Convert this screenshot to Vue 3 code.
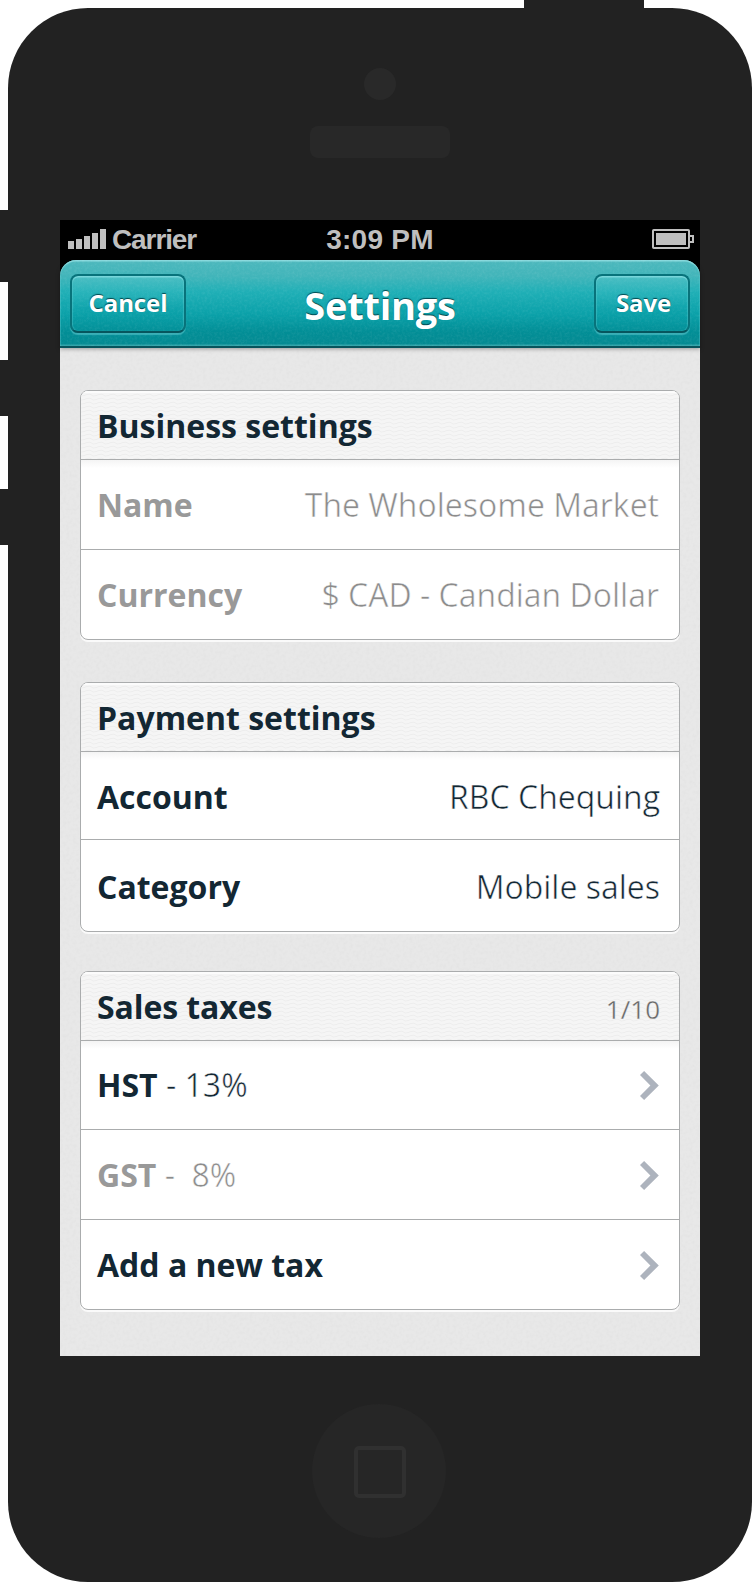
<script setup>
const bars = [8, 10, 13, 16, 20]

const sections = [
  {
    title: 'Business settings',
    size: 'business',
    rows: [
      { label: 'Name', value: 'The Wholesome Market', muted: true },
      { label: 'Currency', value: '$ CAD - Candian Dollar', muted: true },
    ],
  },
  {
    title: 'Payment settings',
    size: 'payment',
    rows: [
      { label: 'Account', value: 'RBC Chequing' },
      { label: 'Category', value: 'Mobile sales' },
    ],
  },
  {
    title: 'Sales taxes',
    size: 'taxes',
    count: '1/10',
    rows: [
      { label: 'HST', detail: ' - 13%', link: true },
      { label: 'GST', detail: ' -\u00a0 8%', link: true, muted: true },
      { label: 'Add a new tax', link: true },
    ],
  },
]
</script>

<template>
  <div class="stage">
    <span class="key key-top"></span>
    <span class="key key-mute"></span>
    <span class="key key-up"></span>
    <span class="key key-down"></span>

    <div class="phone">
      <div class="camera"></div>
      <div class="speaker"></div>

      <div class="screen">
        <div class="status">
          <div class="carrier">
            <span class="signal">
              <i v-for="h in bars" :key="h" :style="{ height: h + 'px' }"></i>
            </span>
            <span class="carrier-name">Carrier</span>
          </div>
          <span class="clock">3:09 PM</span>
          <svg class="battery" width="42" height="20" viewBox="0 0 42 20">
            <rect x="1" y="1" width="36" height="18" rx="0.8" fill="none" stroke="#bfbfbf" stroke-width="2" />
            <rect x="4" y="4" width="30" height="12" fill="#bfbfbf" />
            <path d="M38 7H41V13H38" fill="none" stroke="#bfbfbf" stroke-width="2" />
          </svg>
        </div>

        <div class="bar-wrap">
          <header class="bar">
            <svg class="grain" width="640" height="86">
              <filter id="bar-grain" x="0" y="0" width="100%" height="100%">
                <feTurbulence type="fractalNoise" baseFrequency="0.4" numOctaves="2" seed="4" />
                <feColorMatrix values="0 0 0 0 1  0 0 0 0 1  0 0 0 0 1  0.5 0 0 0 -0.2" />
              </filter>
              <rect width="640" height="86" filter="url(#bar-grain)" />
            </svg>
            <button class="btn cancel">Cancel</button>
            <h1>Settings</h1>
            <button class="btn save">Save</button>
          </header>
        </div>

        <main class="content">
          <svg class="grain" width="640" height="1008">
            <filter id="page-grain" x="0" y="0" width="100%" height="100%">
              <feTurbulence type="fractalNoise" baseFrequency="0.3" numOctaves="2" seed="9" />
              <feColorMatrix values="0 0 0 0 0.5  0 0 0 0 0.5  0 0 0 0 0.5  0.2 0 0 0 -0.08" />
            </filter>
            <rect width="640" height="1008" filter="url(#page-grain)" />
          </svg>

          <section v-for="s in sections" :key="s.title" class="card" :class="s.size">
            <div class="card-head">
              <svg class="waves" width="598" height="66">
                <defs>
                  <pattern :id="'wave-' + s.size" width="12" height="4" patternUnits="userSpaceOnUse">
                    <path d="M0 3Q3 3 6 1.5T12 3" fill="none" stroke="#ededed" stroke-width="1" />
                  </pattern>
                </defs>
                <rect width="598" height="66" :fill="`url(#wave-${s.size})`" />
              </svg>
              <h2>{{ s.title }}</h2>
              <span v-if="s.count" class="count">{{ s.count }}</span>
            </div>
            <div v-for="r in s.rows" :key="r.label" class="row" :class="{ muted: r.muted }">
              <span class="label"><b>{{ r.label }}</b><span v-if="r.detail" class="thin">{{ r.detail }}</span></span>
              <span v-if="r.value" class="value thin">{{ r.value }}</span>
              <svg v-if="r.link" class="chevron" width="19" height="29" viewBox="0 0 19 29">
                <path d="M0 4L4.1 0L18.8 14.5L4.1 29L0 25L10.4 14.5Z" fill="#adb3bd" />
              </svg>
            </div>
          </section>
        </main>
      </div>

      <div class="home"><span></span></div>
    </div>
  </div>
</template>

<style>
body {
  background: #fff;
}
</style>

<style scoped>
.stage {
  position: relative;
  width: 752px;
  height: 1582px;
  padding: 8px 0 0 8px;
  box-sizing: border-box;
  overflow: hidden;
  font-family: "Open Sans", "Noto Sans", sans-serif;
}
.key {
  position: absolute;
  background: #222;
}
.key-top { left: 524px; top: 0; width: 120px; height: 10px; }
.key-mute { left: 0; top: 210px; width: 10px; height: 72px; }
.key-up { left: 0; top: 360px; width: 10px; height: 56px; }
.key-down { left: 0; top: 489px; width: 10px; height: 56px; }

.phone {
  position: relative;
  width: 744px;
  height: 1574px;
  border-radius: 80px;
  background: #222;
  display: flex;
  flex-direction: column;
  align-items: center;
  box-sizing: border-box;
  padding-top: 60px;
}
.camera {
  width: 32px;
  height: 32px;
  border-radius: 50%;
  background: #292929;
}
.speaker {
  width: 140px;
  height: 32px;
  margin-top: 26px;
  border-radius: 8px;
  background: #282828;
}
.screen {
  width: 640px;
  height: 1136px;
  margin-top: 62px;
  background: #000;
  display: flex;
  flex-direction: column;
}
.home {
  width: 134px;
  height: 134px;
  margin: 48px 2px 0 0;
  border-radius: 50%;
  background: #262626;
  display: flex;
  align-items: center;
  justify-content: center;
}
.home span {
  width: 44px;
  height: 44px;
  margin: 2px 0 0 1px;
  border: 4px solid #303030;
  border-radius: 5px;
}

.status {
  height: 40px;
  padding: 0 6px 0 8px;
  display: grid;
  grid-template-columns: 1fr auto 1fr;
  align-items: center;
  font: bold 28px/40px "Liberation Sans", Arial, sans-serif;
  color: #bfbfbf;
}
.carrier {
  display: flex;
}
.carrier-name {
  margin-left: 6px;
  letter-spacing: -1.1px;
}
.clock {
  margin-right: 2px;
  letter-spacing: 0.25px;
}
.signal {
  display: flex;
  align-items: flex-end;
  gap: 2px;
  height: 29px;
}
.signal i {
  width: 6px;
  background: #bfbfbf;
}
.battery {
  justify-self: end;
  margin-top: -2px;
}

.bar-wrap {
  position: relative;
  z-index: 1;
  height: 88px;
}
.bar {
  position: relative;
  height: 88px;
  box-sizing: border-box;
  padding: 14px 10px 0;
  display: grid;
  grid-template-columns: 116px 1fr 96px;
  align-items: start;
  border-radius: 16px 16px 0 0;
  border-bottom: 2px solid #07545c;
  background: linear-gradient(#4db8bd 0, #42b5ba 16px, #1fafb6 32px, #0ba1a9 54px, #028e96 72px, #058a92 100%);
  box-shadow: 0 1px 4px rgba(0, 0, 0, 0.35), inset 0 2px 1px -0.5px rgba(160, 230, 232, 0.75), inset 0 -1.5px 0 rgba(70, 175, 180, 0.7), inset 1px 0 0 rgba(90, 200, 205, 0.35), inset -1px 0 0 rgba(90, 200, 205, 0.35);
}
.grain {
  position: absolute;
  left: 0;
  top: 0;
  pointer-events: none;
}
.bar .grain {
  opacity: 0.3;
  border-radius: 16px 16px 0 0;
}
.bar h1 {
  position: relative;
  margin: 4px 20px 0 0;
  text-align: center;
  font-size: 38px;
  line-height: 54px;
  font-weight: 700;
  letter-spacing: -0.25px;
  color: #fff;
  text-shadow: 0 -1px 1px rgba(0, 60, 66, 0.9);
}
.btn {
  position: relative;
  height: 59px;
  box-sizing: border-box;
  padding: 0 0 2px;
  border: 2px solid #08737b;
  border-bottom-color: #07565e;
  border-radius: 8px;
  background: linear-gradient(rgba(90, 205, 210, 0.35), rgba(0, 150, 160, 0.08) 60%);
  box-shadow: inset 0 2px 1px -0.5px rgba(130, 220, 224, 0.85), inset 1px 0 1px rgba(110, 215, 220, 0.3), inset -1px 0 1px rgba(110, 215, 220, 0.3), 0 1.5px 1px rgba(80, 190, 196, 0.7);
  font-family: inherit;
  font-size: 24px;
  font-weight: 700;
  letter-spacing: -0.1px;
  color: #fff;
  text-shadow: 0 -1px 1px rgba(0, 60, 66, 0.9);
}
.save {
  padding-left: 3px;
}

.content {
  position: relative;
  flex: 1;
  padding: 42px 20px 0;
  background: #e8e8e8;
  color: #132733;
}
.card {
  position: relative;
  box-sizing: border-box;
  width: 600px;
  display: grid;
  border: 1px solid #aaacad;
  border-radius: 8px;
  background: #fff;
  overflow: hidden;
  box-shadow: 0 2px 0 #fafafa;
}
.business { grid-template-rows: 68px 90px 90px; height: 250px; margin-bottom: 42px; }
.payment { grid-template-rows: 68px 88px 92px; height: 250px; margin-bottom: 39px; }
.taxes { grid-template-rows: 68px 89px 90px 90px; height: 339px; }
.card-head {
  position: relative;
  display: flex;
  justify-content: space-between;
  padding: 0 20px 0 16px;
  background: #f5f5f5;
  box-shadow: inset 0 2px 0 #fcfcfc;
}
.waves {
  position: absolute;
  left: 0;
  top: 2px;
}
.card-head h2 {
  position: relative;
  margin: 0;
  font-size: 32px;
  line-height: 69px;
  font-weight: 700;
}
.taxes h2 {
  letter-spacing: -0.1px;
}
.count {
  position: relative;
  margin-right: -1px;
  font-size: 26px;
  line-height: 74px;
  font-weight: 400;
  -webkit-text-stroke: 0.3px #f4f4f4;
  color: #666;
}
.row {
  display: flex;
  align-items: center;
  justify-content: space-between;
  box-sizing: border-box;
  padding: 0 20px 0 16px;
  border-top: 1px solid #aaacad;
  font-size: 32px;
  line-height: 44px;
  font-weight: 400;
  white-space: pre;
}
.payment .row {
  padding-top: 2px;
  padding-right: 19px;
}
/* A hairline in the row colour slims the regular weight. */
.thin {
  -webkit-text-stroke: 0.5px #fff;
}
.card-head + .row {
  background: linear-gradient(#f4f4f4, #fff 8px);
}
.row b {
  font-weight: 700;
}
.muted {
  color: #999;
}
.muted .thin {
  color: #8c8c8c;
}
.chevron {
  display: block;
}
.row + .row .chevron {
  margin-top: 1px;
}
</style>
